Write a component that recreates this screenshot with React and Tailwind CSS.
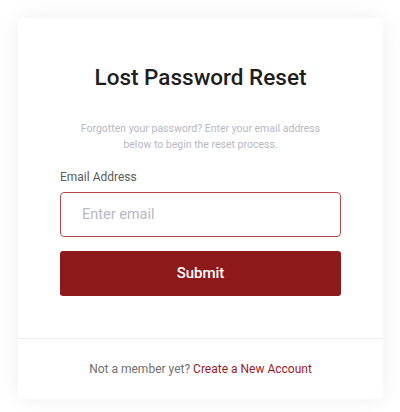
export default function App() {
  return (
    <div className="min-h-[412px] w-[400px] bg-white pt-[18px] pl-[18px]" style={{ fontFamily: 'Roboto, "Noto Sans", sans-serif' }}>
      <div className="w-[365px] rounded-[5px] bg-white shadow-[0_0_22px_rgba(0,0,0,0.07)]">
        <div className="px-[42px] pt-[45px] pb-[42px]">
          <h1 className="text-center text-[22.5px] leading-[28px] font-medium text-[#1e1e1e]">Lost Password Reset</h1>
          <p className="mt-[30px] text-center text-[10.5px] leading-[16px] text-[#b8b8c6]">
            Forgotten your password? Enter your email address<br />below to begin the reset process.
          </p>
          <label className="mt-[15px] block text-[12px] leading-[18px] text-[#5c5c5c]">Email Address</label>
          <input
            type="email"
            placeholder="Enter email"
            className="mt-[6px] block h-[45px] w-full rounded-[4px] border border-[#b94a4a] px-[21px] text-[14.5px] text-[#333] placeholder:text-[#b8b8c4] outline-none"
          />
          <button className="mt-[14px] block h-[45px] w-full rounded-[3px] bg-[#8e191b] text-[15px] font-medium text-white">
            Submit
          </button>
        </div>
        <div className="border-t border-[#eeeeee] pt-[20px] pb-[20px] text-center text-[12px] leading-[20px]">
          <span className="text-[#707070]">Not a member yet? </span>
          <a className="text-[#9a1c1f]" href="#">Create a New Account</a>
        </div>
      </div>
    </div>
  );
}
